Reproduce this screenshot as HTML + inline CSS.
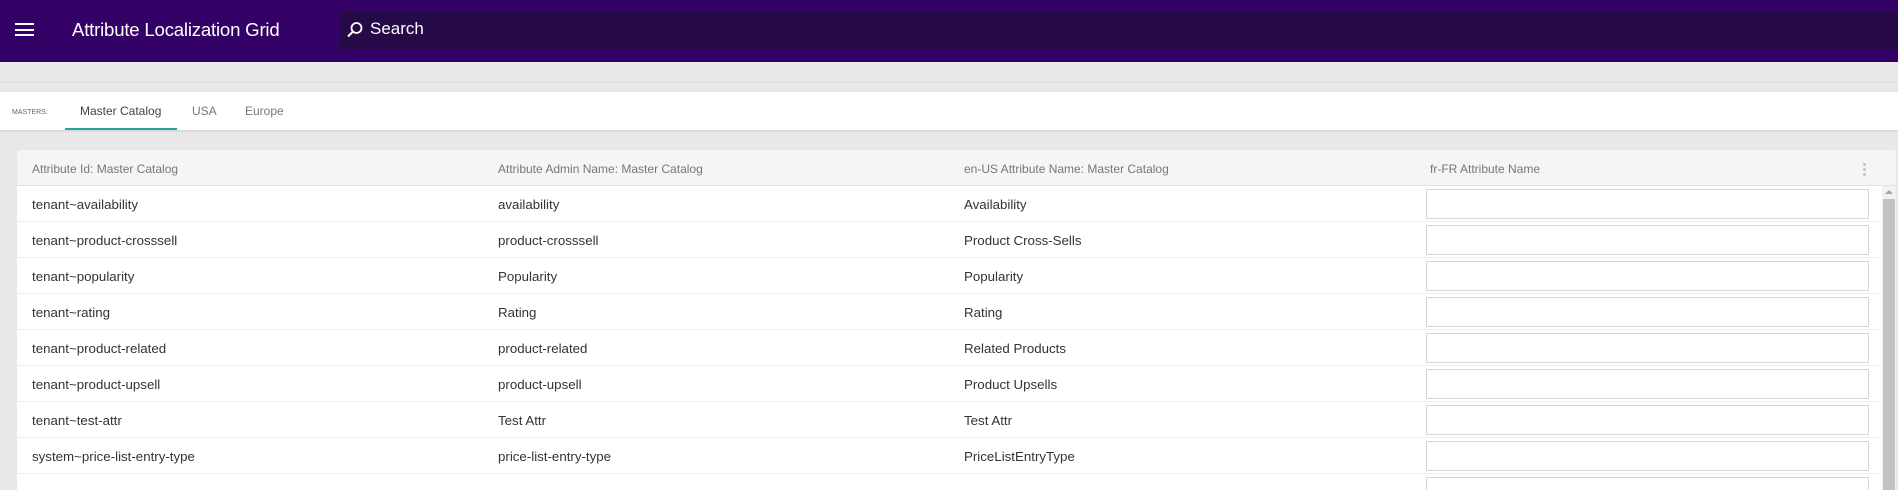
<!DOCTYPE html>
<html><head><style>
*{box-sizing:border-box;margin:0;padding:0}
body{width:1898px;height:481px;overflow:hidden;background:#e8e8e8;font-family:"Liberation Sans",sans-serif;position:relative}
.top{position:absolute;left:0;top:0;width:1898px;height:62px;background:#330066}
.search{position:absolute;left:340px;top:12px;width:1558px;height:38px;background:#260a48}
.ham{position:absolute;left:15px;top:23px;width:19px;height:13px}
.ham i{display:block;height:2px;background:#fff;margin-bottom:3.5px}
.title{position:absolute;left:72px;top:19px;color:#fff;font-size:18.6px;letter-spacing:-0.2px}
.stext{position:absolute;left:370px;top:19px;color:#fff;font-size:17px}
.line{position:absolute;left:0;top:82px;width:1898px;height:1px;background:#dcdcdc}
.tabs{position:absolute;left:0;top:92px;width:1898px;height:38px;background:#fff;box-shadow:0 1px 2px rgba(0,0,0,.12)}
.masters{position:absolute;left:12px;top:17px;font-size:7px;color:#666}
.tab{position:absolute;top:12px;font-size:12px;color:#777}
.ul{position:absolute;left:65px;top:36px;width:112px;height:2px;background:#26a69a}
.card{position:absolute;left:17px;top:150px;width:1879px;height:340px;background:#fff;border-radius:3px 3px 0 0;overflow:hidden}
.hdr{position:absolute;left:0;top:0;width:100%;height:36px;background:#f5f5f5;border-bottom:1px solid #e2e2e2}
.hdr span{position:absolute;top:12px;font-size:12px;color:#777}
.row{position:absolute;left:0;width:1863px;height:36px;border-bottom:1px solid #eee}
.row span{position:absolute;top:11px;font-size:13.3px;color:#333}
.row b{position:absolute;left:1409px;top:3px;width:443px;height:30px;border:1px solid #d6d6d6;background:#fff}
.sb{position:absolute;left:1865px;top:36px;width:14px;height:310px;background:#f1f1f1}
.thumb{position:absolute;left:1px;top:13px;width:12px;height:300px;background:#c1c1c1}
.arr{position:absolute;left:3px;top:4px;width:0;height:0;border-left:4px solid transparent;border-right:4px solid transparent;border-bottom:4px solid #a3a3a3}
.keb{position:absolute;left:1846px;top:13px}
.keb i{display:block;width:3px;height:3px;border-radius:50%;background:#c4c4c4;margin-bottom:2px}
</style></head><body>
<div class="top">
<div class="search"></div>
<div class="ham"><i></i><i></i><i></i></div>
<div class="title">Attribute Localization Grid</div>
<svg style="position:absolute;left:346px;top:21px" width="18" height="18" viewBox="0 0 18 18"><circle cx="10.5" cy="7" r="5" fill="none" stroke="#fff" stroke-width="1.8"/><line x1="7" y1="10.5" x2="2" y2="15.5" stroke="#fff" stroke-width="2"/></svg>
<div class="stext">Search</div>
</div>
<div class="line"></div>
<div class="tabs">
<div class="masters">MASTERS:</div>
<div class="tab" style="left:80px;color:#444">Master Catalog</div>
<div class="tab" style="left:192px">USA</div>
<div class="tab" style="left:245px">Europe</div>
<div class="ul"></div>
</div>
<div class="card">
<div class="hdr">
<span style="left:15px">Attribute Id: Master Catalog</span>
<span style="left:481px">Attribute Admin Name: Master Catalog</span>
<span style="left:947px">en-US Attribute Name: Master Catalog</span>
<span style="left:1413px">fr-FR Attribute Name</span>
<div class="keb"><i></i><i></i><i></i></div>
</div>
<div class="row" style="top:36px"><span style="left:15px">tenant~availability</span><span style="left:481px">availability</span><span style="left:947px">Availability</span><b></b></div>
<div class="row" style="top:72px"><span style="left:15px">tenant~product-crosssell</span><span style="left:481px">product-crosssell</span><span style="left:947px">Product Cross-Sells</span><b></b></div>
<div class="row" style="top:108px"><span style="left:15px">tenant~popularity</span><span style="left:481px">Popularity</span><span style="left:947px">Popularity</span><b></b></div>
<div class="row" style="top:144px"><span style="left:15px">tenant~rating</span><span style="left:481px">Rating</span><span style="left:947px">Rating</span><b></b></div>
<div class="row" style="top:180px"><span style="left:15px">tenant~product-related</span><span style="left:481px">product-related</span><span style="left:947px">Related Products</span><b></b></div>
<div class="row" style="top:216px"><span style="left:15px">tenant~product-upsell</span><span style="left:481px">product-upsell</span><span style="left:947px">Product Upsells</span><b></b></div>
<div class="row" style="top:252px"><span style="left:15px">tenant~test-attr</span><span style="left:481px">Test Attr</span><span style="left:947px">Test Attr</span><b></b></div>
<div class="row" style="top:288px"><span style="left:15px">system~price-list-entry-type</span><span style="left:481px">price-list-entry-type</span><span style="left:947px">PriceListEntryType</span><b></b></div>
<div class="row" style="top:324px"><b></b></div>
<div class="sb"><div class="arr"></div><div class="thumb"></div></div>
</div>
</body></html>
